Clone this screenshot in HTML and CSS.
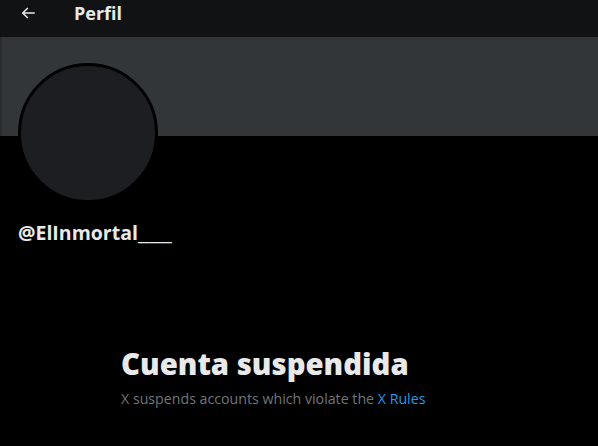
FILE: index.html
```html
<!DOCTYPE html>
<html lang="es">
<head>
    <meta charset="UTF-8">
    <meta name="viewport" content="width=device-width, initial-scale=1.0">
    <title>Perfil</title>
    <link rel="stylesheet" href="styles.css">
</head>
<body>

    <!-- Top bar -->
    <div class="topbar">
        <div class="back">
            <svg viewBox="0 0 24 24" width="18" height="18"><path d="M7.414 13l5.043 5.04-1.414 1.42L3.586 12l7.457-7.46 1.414 1.42L7.414 11H21v2H7.414z" fill="#e7e9ea"/></svg>
        </div>
        <h2 class="title">Perfil</h2>
    </div>

    <!-- Banner + avatar -->
    <div class="banner"></div>
    <div class="profile">
        <div class="avatar"></div>
        <div class="handle">@ElInmortal<span class="under">___</span></div>
    </div>

    <!-- Suspended message -->
    <div class="suspended">
        <h1>Cuenta suspendida</h1>
        <p>X suspends accounts which violate the <a href="#">X Rules</a></p>
    </div>

</body>
</html>
```

FILE: styles.css
```css
body {
    margin: 0;
    background: #000;
    color: #e7e9ea;
    font-family: 'Open Sans', 'Noto Sans', sans-serif;
    height: 100vh;
    overflow: hidden;
}

.topbar {
    height: 37px;
    background: #111214;
    display: flex;
    align-items: center;
}

.back {
    width: 74px;
    display: flex;
    padding-left: 19px;
    box-sizing: border-box;
    margin-top: -12px;
}

.title {
    margin: -12px 0 0 0;
    font-size: 18px;
    font-weight: 700;
    color: #e7e9ea;
}

.banner {
    height: 99px;
    background: #333639;
    border-left: 2px solid #2a2c2f;
}

.profile {
    padding-left: 18px;
    margin-top: -73px;
}

/* Avatar overlaps the banner */
.avatar {
    width: 134px;
    height: 134px;
    border-radius: 50%;
    background: #1c1e21;
    border: 3px solid #000;
}

.handle {
    margin-top: 17px;
    font-size: 19.5px;
    font-weight: 700;
    line-height: 26px;
    color: #e7e9ea;
}

/* underscores are wider in the original font */
.handle .under {
    display: inline-block;
    transform: scaleX(1.4);
    transform-origin: left;
}

.suspended {
    padding-left: 121px;
    margin-top: 98px;
}

.suspended h1 {
    margin: 0;
    font-size: 29.3px;
    font-weight: 800;
    line-height: 40px;
    color: #e7e9ea;
}

.suspended p {
    margin: 5px 0 0 0;
    font-size: 14.2px;
    color: #71767b;
}

.suspended a {
    color: #1d9bf0;
    text-decoration: none;
}
```
